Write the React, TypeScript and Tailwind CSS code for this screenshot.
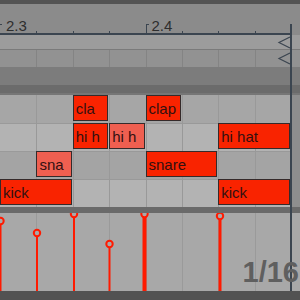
const colStart = ["col-start-1", "col-start-2", "col-start-3", "col-start-4", "col-start-5", "col-start-6", "col-start-7", "col-start-8"];
const rowStart = ["row-start-1", "row-start-2", "row-start-3", "row-start-4"];
const colSpan = ["col-span-1", "col-span-2"];
const rowBg = ["bg-[#a6a6a6]", "bg-[#b3b3b3]", "bg-[#a4a4a4]", "bg-[#b3b3b3]"];

type Note = { name: string; row: number; col: number; span: number; soft?: boolean };

const notes: Note[] = [
  { name: "cla", row: 0, col: 2, span: 1 },
  { name: "clap", row: 0, col: 4, span: 1 },
  { name: "hi h", row: 1, col: 2, span: 1 },
  { name: "hi h", row: 1, col: 3, span: 1, soft: true },
  { name: "hi hat", row: 1, col: 6, span: 2 },
  { name: "sna", row: 2, col: 1, span: 1, soft: true },
  { name: "snare", row: 2, col: 4, span: 2 },
  { name: "kick", row: 3, col: 0, span: 2 },
  { name: "kick", row: 3, col: 6, span: 2 },
];

// x of stem, y of the lollipop head, stem width
const velocities = [
  { x: 0.5, y: 7, w: 2 },
  { x: 37, y: 19, w: 2 },
  { x: 74, y: 0, w: 2 },
  { x: 109.5, y: 30, w: 2 },
  { x: 144.5, y: 0, w: 4 },
  { x: 220, y: 2, w: 3 },
];

const steps = [0, 1, 2, 3, 4, 5, 6, 7];

function RulerCell({ index }: { index: number }) {
  const label = index === 0 ? "2.3" : index === 4 ? "2.4" : null;
  return (
    <div className="relative flex items-end">
      {label ? (
        <>
          <span className={`absolute bottom-0 h-[9px] w-[3px] border-l border-t border-[#3b4550] ${index === 0 ? "-left-[1px]" : "left-0"}`} />
          <span className="pl-[6px] text-[15px] leading-none text-[#2e2e2e]">{label}</span>
        </>
      ) : (
        <span className="absolute bottom-0 left-0 h-[2px] w-px bg-[#3b4550]" />
      )}
    </div>
  );
}

export default function App() {
  return (
    <div className="relative h-[300px] w-[300px] overflow-hidden bg-[#8b8b8b] font-['Liberation_Sans',Arial,sans-serif]">
      <div className="h-[4px] bg-[#545454]" />

      {/* ruler */}
      <div className="flex h-[31px]">
        <div className="grid w-[291px] grid-cols-8 border-b-2 border-[#3b4550]">
          {steps.map((i) => (
            <RulerCell key={i} index={i} />
          ))}
        </div>
        <div className="flex-1" />
      </div>

      {/* lanes above the grid */}
      <div className="h-[15px] border-b border-[#7a7a7a] bg-[#9c9c9c]" />
      <div className="flex h-[17px] bg-[#929292]">
        <div className="grid w-[291px] grid-cols-8">
          {steps.map((i) => (
            <div key={i} className={i > 0 ? "border-l border-[#848484]" : ""} />
          ))}
        </div>
      </div>
      <div className="h-[18px] bg-[#7c7c7c]" />
      <div className="h-[10px] border-b-2 border-[#767676] bg-[#6b6b6b]" />

      {/* note grid */}
      <div className="flex h-[112px]">
        <div className="grid w-[291px] grid-cols-8 grid-rows-[repeat(4,28px)]">
          {rowStart.map((r, ri) =>
            steps.map((c) => (
              <div
                key={`${ri}-${c}`}
                className={`${r} ${colStart[c]} ${rowBg[ri]} ${c > 0 ? "border-l border-[#999999]" : ""} ${ri > 0 ? "border-t border-[#9a9a9a]" : ""}`}
              />
            ))
          )}
          {notes.map((n, i) => (
            <div
              key={i}
              className={`${rowStart[n.row]} ${colStart[n.col]} ${colSpan[n.span - 1]} z-10 mb-[2px] mr-px flex items-center overflow-hidden whitespace-nowrap border border-[#352a2a] pl-[2px] pt-px text-[15px] leading-none text-[#331010] ${n.soft ? "bg-[#ef5f50]" : "bg-[#f92300]"}`}
            >
              {n.name}
            </div>
          ))}
        </div>
        <div className="flex-1 border-l border-[#7d7d7d] bg-[#8e8e8e]" />
      </div>

      <div className="h-[6px] bg-[#6a6a6a]" />

      {/* velocity lane */}
      <div className="relative flex h-[78px] bg-[#a8a8a8]">
        <div className="relative grid w-[291px] grid-cols-8">
          {steps.map((i) => (
            <div key={i} className={i > 0 ? "border-l border-[#9a9a9a]" : ""} />
          ))}
          <svg className="absolute inset-0" width="291" height="78" viewBox="0 0 291 78">
            {velocities.map((v, i) => (
              <g key={i}>
                <line x1={v.x} y1={v.y} x2={v.x} y2={78} stroke="#ff1a00" strokeWidth={v.w} />
                <circle cx={v.x} cy={v.y + 1} r={3.2} fill="#a8a8a8" stroke="#ff1a00" strokeWidth={2} />
              </g>
            ))}
          </svg>
        </div>
        <div className="flex-1" />
        <span className="absolute bottom-[4px] right-[1px] z-10 text-[29px] font-bold leading-none text-[#5f5f5f]">1/16</span>
      </div>

      <div className="h-[9px] bg-[#525252]" />

      {/* end marker */}
      <div className="absolute bottom-[9px] left-[290px] top-[24px] w-[2px] bg-[#3b4550]" />
      <svg className="absolute left-[277px] top-[36px]" width="14" height="30" viewBox="0 0 14 30">
        <polyline points="13,1 2,6.5 13,12" fill="none" stroke="#3b4550" strokeWidth="1.2" />
        <polyline points="13,17 2,22.5 13,28" fill="none" stroke="#3b4550" strokeWidth="1.2" />
      </svg>
    </div>
  );
}
